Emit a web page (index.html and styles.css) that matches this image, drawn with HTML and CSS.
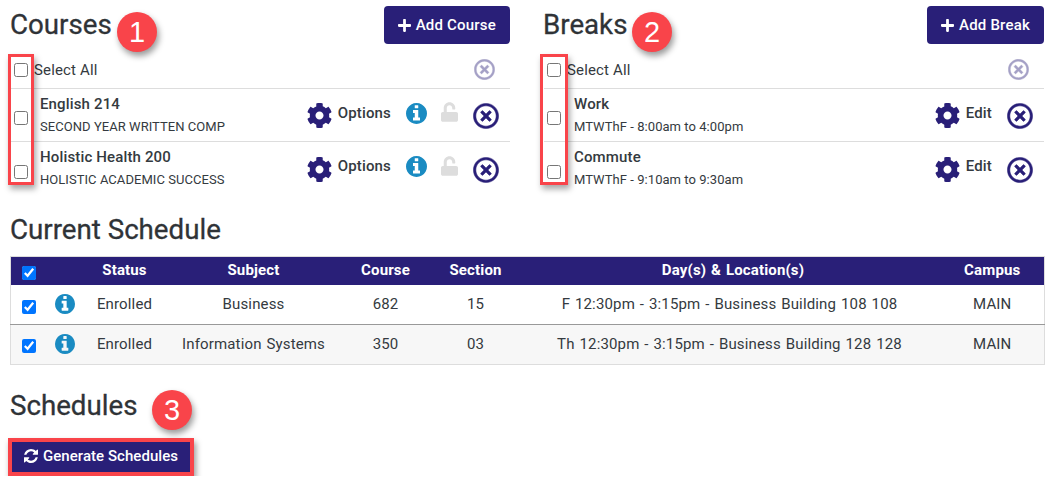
FILE: index.html
```html
<!DOCTYPE html>
<html lang="en">
<head>
    <meta charset="UTF-8">
    <title>Schedule Builder</title>
    <link rel="stylesheet" href="styles.css">
</head>
<body>
    <!-- icon set -->
    <svg class="icon-defs" aria-hidden="true">
        <symbol id="i-cog" viewBox="16 8 480 496"><path d="M487.4 315.7l-42.6-24.6c4.3-23.2 4.3-47 0-70.2l42.6-24.6c4.9-2.8 7.1-8.6 5.5-14-11.1-35.6-30-67.8-54.7-94.6-3.8-4.1-10-5.1-14.8-2.3L380.8 110c-17.9-15.4-38.5-27.3-60.8-35.1V25.8c0-5.6-3.9-10.5-9.4-11.7-36.7-8.2-74.3-7.8-109.2 0-5.5 1.2-9.4 6.1-9.4 11.7V75c-22.2 7.9-42.8 19.8-60.8 35.1L88.7 85.5c-4.9-2.8-11-1.9-14.8 2.3-24.7 26.7-43.6 58.9-54.7 94.6-1.7 5.4.6 11.2 5.5 14L67.3 221c-4.3 23.2-4.3 47 0 70.2l-42.6 24.6c-4.9 2.8-7.1 8.6-5.5 14 11.1 35.6 30 67.8 54.7 94.6 3.8 4.1 10 5.1 14.8 2.3l42.6-24.6c17.9 15.4 38.5 27.3 60.8 35.1v49.2c0 5.6 3.9 10.5 9.4 11.7 36.7 8.2 74.3 7.8 109.2 0 5.5-1.2 9.4-6.1 9.4-11.7v-49.2c22.2-7.9 42.8-19.8 60.8-35.1l42.6 24.6c4.9 2.8 11 1.9 14.8-2.3 24.7-26.7 43.6-58.9 54.7-94.6 1.5-5.5-.7-11.3-5.6-14.1zM256 336c-44.1 0-80-35.9-80-80s35.9-80 80-80 80 35.9 80 80-35.9 80-80 80z"/></symbol>
        <symbol id="i-info" viewBox="128 128 1536 1536"><path d="M1152 1376v-160q0-14-9-23t-23-9h-96v-512q0-14-9-23t-23-9h-320q-14 0-23 9t-9 23v160q0 14 9 23t23 9h96v320h-96q-14 0-23 9t-9 23v160q0 14 9 23t23 9h448q14 0 23-9t9-23zm-128-896v-160q0-14-9-23t-23-9h-192q-14 0-23 9t-9 23v160q0 14 9 23t23 9h192q14 0 23-9t9-23zm640 416q0 209-103 385.5t-279.5 279.5-385.5 103-385.5-103-279.5-279.5-103-385.5 103-385.5 279.5-279.5 385.5-103 385.5 103 279.5 279.5 103 385.5z"/></symbol>
        <symbol id="i-unlock" viewBox="0 0 448 512"><path d="M400 256H152V152.9c0-39.6 31.7-72.5 71.3-72.9 40-.4 72.7 32.1 72.7 72v16c0 13.3 10.7 24 24 24h32c13.3 0 24-10.7 24-24v-16C376 68 307.5-.3 223.5 0 139.5.3 72 69.5 72 153.5V256H48c-26.5 0-48 21.5-48 48v160c0 26.5 21.5 48 48 48h352c26.5 0 48-21.5 48-48V304c0-26.5-21.5-48-48-48z"/></symbol>
        <symbol id="i-times" viewBox="0 0 512 512"><path d="M256 8C119 8 8 119 8 256s111 248 248 248 248-111 248-248S393 8 256 8zm0 448c-110.5 0-200-89.5-200-200S145.5 56 256 56s200 89.5 200 200-89.5 200-200 200zm101.8-262.2L295.6 256l62.2 62.2c4.7 4.7 4.7 12.3 0 17l-22.6 22.6c-4.7 4.7-12.3 4.7-17 0L256 295.6l-62.2 62.2c-4.7 4.7-12.3 4.7-17 0l-22.6-22.6c-4.7-4.7-4.7-12.3 0-17l62.2-62.2-62.2-62.2c-4.7-4.7-4.7-12.3 0-17l22.6-22.6c4.7-4.7 12.3-4.7 17 0l62.2 62.2 62.2-62.2c4.7-4.7 12.3-4.7 17 0l22.6 22.6c4.7 4.7 4.7 12.3 0 17z"/></symbol>
        <symbol id="i-plus" viewBox="0 0 448 448"><path d="M416 176H272V32c0-17.700-14.300-32-32-32h-32c-17.700 0-32 14.300-32 32v144H32c-17.700 0-32 14.300-32 32v32c0 17.700 14.300 32 32 32h144v144c0 17.700 14.300 32 32 32h32c17.700 0 32-14.300 32-32V272h144c17.700 0 32-14.300 32-32v-32c0-17.700-14.300-32-32-32z"/></symbol>
        <symbol id="i-refresh" viewBox="128 128 1536 1536"><path d="M1639 1056q0 5-1 7-64 268-268 434.500t-478 166.500q-146 0-282.500-55t-243.500-157l-129 129q-19 19-45 19t-45-19-19-45v-448q0-26 19-45t45-19h448q26 0 45 19t19 45-19 45l-137 137q71 66 161 102t187 36q134 0 250-65t186-179q11-17 53-117 8-23 30-23h192q13 0 22.500 9.500t9.500 22.500zm25-800v448q0 26-19 45t-45 19h-448q-26 0-45-19t-19-45 19-45l138-138q-148-137-349-137-134 0-250 65t-186 179q-11 17-53 117-8 23-30 23h-199q-13 0-22.500-9.500t-9.500-22.500v-7q65-268 270-434.500t480-166.500q146 0 284 55.500t245 156.500l130-129q19-19 45-19t45 19 19 45z"/></symbol>
    </svg>

    <main class="page">
        <div class="panels">
            <!-- courses -->
            <section class="panel">
                <div class="panel-head">
                    <h2>Courses</h2>
                    <button type="button" class="btn"><svg class="btn-icon"><use href="#i-plus"/></svg>Add Course</button>
                </div>
                <div class="select-row">
                    <input type="checkbox" class="select-check">
                    <span class="select-label">Select All</span>
                    <svg class="remove-all"><use href="#i-times"/></svg>
                </div>
                <div class="item">
                    <input type="checkbox" class="item-check">
                    <div class="item-text">
                        <div class="item-name">English 214</div>
                        <div class="item-sub">SECOND YEAR WRITTEN COMP</div>
                    </div>
                    <svg class="cog"><use href="#i-cog"/></svg>
                    <span class="action-label">Options</span>
                    <svg class="info"><use href="#i-info"/></svg>
                    <svg class="lock"><use href="#i-unlock"/></svg>
                    <svg class="remove"><use href="#i-times"/></svg>
                </div>
                <div class="item no-border">
                    <input type="checkbox" class="item-check">
                    <div class="item-text">
                        <div class="item-name">Holistic Health 200</div>
                        <div class="item-sub">HOLISTIC ACADEMIC SUCCESS</div>
                    </div>
                    <svg class="cog"><use href="#i-cog"/></svg>
                    <span class="action-label">Options</span>
                    <svg class="info"><use href="#i-info"/></svg>
                    <svg class="lock"><use href="#i-unlock"/></svg>
                    <svg class="remove"><use href="#i-times"/></svg>
                </div>
                <span class="callout-box"></span>
                <span class="badge badge-courses">1</span>
            </section>

            <!-- breaks -->
            <section class="panel panel-breaks">
                <div class="panel-head">
                    <h2>Breaks</h2>
                    <button type="button" class="btn"><svg class="btn-icon"><use href="#i-plus"/></svg>Add Break</button>
                </div>
                <div class="select-row">
                    <input type="checkbox" class="select-check">
                    <span class="select-label">Select All</span>
                    <svg class="remove-all"><use href="#i-times"/></svg>
                </div>
                <div class="item">
                    <input type="checkbox" class="item-check">
                    <div class="item-text">
                        <div class="item-name">Work</div>
                        <div class="item-sub">MTWThF - 8:00am to 4:00pm</div>
                    </div>
                    <svg class="cog"><use href="#i-cog"/></svg>
                    <span class="action-label">Edit</span>
                    <svg class="remove"><use href="#i-times"/></svg>
                </div>
                <div class="item no-border">
                    <input type="checkbox" class="item-check">
                    <div class="item-text">
                        <div class="item-name">Commute</div>
                        <div class="item-sub">MTWThF - 9:10am to 9:30am</div>
                    </div>
                    <svg class="cog"><use href="#i-cog"/></svg>
                    <span class="action-label">Edit</span>
                    <svg class="remove"><use href="#i-times"/></svg>
                </div>
                <span class="callout-box"></span>
                <span class="badge badge-breaks">2</span>
            </section>
        </div>

        <!-- current schedule -->
        <h2 class="schedule-title">Current Schedule</h2>
        <table class="schedule">
            <colgroup>
                <col class="col-check">
                <col class="col-info">
                <col class="col-status">
                <col class="col-subject">
                <col class="col-course">
                <col class="col-section">
                <col class="col-days">
                <col class="col-campus">
            </colgroup>
            <thead>
                <tr>
                    <th><input type="checkbox" checked></th>
                    <th></th>
                    <th>Status</th>
                    <th>Subject</th>
                    <th>Course</th>
                    <th>Section</th>
                    <th class="th-days">Day(s) &amp; Location(s)</th>
                    <th>Campus</th>
                </tr>
            </thead>
            <tbody>
                <tr>
                    <td><input type="checkbox" checked></td>
                    <td><svg class="info"><use href="#i-info"/></svg></td>
                    <td>Enrolled</td>
                    <td>Business</td>
                    <td>682</td>
                    <td>15</td>
                    <td>F 12:30pm - 3:15pm - Business Building 108 108</td>
                    <td>MAIN</td>
                </tr>
                <tr>
                    <td><input type="checkbox" checked></td>
                    <td><svg class="info"><use href="#i-info"/></svg></td>
                    <td>Enrolled</td>
                    <td>Information Systems</td>
                    <td>350</td>
                    <td>03</td>
                    <td>Th 12:30pm - 3:15pm - Business Building 128 128</td>
                    <td>MAIN</td>
                </tr>
            </tbody>
        </table>

        <!-- schedules -->
        <section class="generate">
            <h2>Schedules</h2>
            <button type="button" class="btn btn-generate"><svg class="btn-icon"><use href="#i-refresh"/></svg>Generate Schedules</button>
            <span class="badge badge-schedules">3</span>
        </section>
    </main>
</body>
</html>
```

FILE: styles.css
```css
body {
    font-family: Roboto, "Liberation Sans", sans-serif;
    background-color: #fff;
    color: #343a40;
    letter-spacing: 0.15px;
    margin: 0;
}

.icon-defs {
    display: none;
}

.page {
    padding: 6px 12px 0 10px;
}

h2 {
    font-size: 27.7px;
    font-weight: 400;
    line-height: 34px;
    letter-spacing: 0;
    margin: 0;
    color: #2f3337;
    -webkit-text-stroke: 0.3px #2f3337;
}

.panels {
    display: grid;
    grid-template-columns: 500px 500px;
    gap: 34px;
}

.panel {
    position: relative;
}

.panel-head {
    display: flex;
    justify-content: space-between;
    align-items: flex-start;
    height: 38px;
}

.panel-head h2 {
    margin-top: 2px;
}

.panel-breaks h2 {
    margin-left: -1px;
}

.btn {
    display: flex;
    align-items: center;
    height: 38px;
    padding: 0 14px;
    background-color: #291f78;
    color: #fff;
    border: none;
    border-radius: 4px;
    font-family: inherit;
    font-size: 15px;
    font-weight: 500;
    letter-spacing: 0.2px;
    cursor: pointer;
}

.btn-icon {
    width: 13px;
    height: 13px;
    margin-right: 5px;
    fill: #fff;
}

.select-row {
    display: flex;
    align-items: center;
    height: 45px;
    padding-top: 7px;
    box-sizing: border-box;
    border-bottom: 1px solid #ddd;
}

.select-check {
    width: 14px;
    height: 14px;
    margin: 0 0 0 4px;
}

.panel-breaks .select-check {
    margin-left: 3px;
}

.select-label {
    font-size: 15px;
    margin-left: 6px;
}

.remove-all {
    width: 21px;
    height: 21px;
    margin-left: auto;
    margin-right: 15px;
    fill: #291f78;
    stroke: #291f78;
    stroke-width: 10px;
    opacity: 0.42;
}

.item {
    display: flex;
    align-items: center;
    height: 53px;
    box-sizing: border-box;
    border-bottom: 1px solid #ddd;
}

.no-border {
    border-bottom: none;
}

.item-check {
    width: 14px;
    height: 14px;
    margin: 6px 0 0 4px;
}

.panel-breaks .item-check {
    margin-left: 3px;
}

.item-text {
    margin: -2px auto 0 12px;
}

.panel-breaks .item-text {
    margin-left: 13px;
}

.item-name {
    font-size: 15px;
    font-weight: 500;
    line-height: 20px;
    margin-bottom: 5px;
}

.item-sub {
    font-size: 13px;
    line-height: 16px;
    letter-spacing: 0.05px;
}

.cog {
    width: 25px;
    height: 25px;
    fill: #291f78;
    margin-top: 1px;
}

.action-label {
    font-size: 15px;
    font-weight: 500;
    margin-left: 6px;
    margin-bottom: 5px;
}

.info {
    width: 21px;
    height: 21px;
    fill: #1a8bc2;
}

.item .info {
    margin-left: 15px;
    margin-bottom: 4px;
}

.lock {
    width: 17px;
    height: 20px;
    margin-left: 14px;
    margin-bottom: 6px;
    fill: #ddd;
}

.remove {
    width: 26px;
    height: 26px;
    fill: #291f78;
    stroke: #291f78;
    stroke-width: 10px;
    margin: 2px 11.500px 0 14.500px;
}

.schedule-title {
    margin: 18px 0 9px;
}

.schedule {
    width: 1034px;
    table-layout: fixed;
    border-collapse: collapse;
    border: 1px solid #ddd;
    font-size: 15px;
    word-spacing: 1px;
}

.col-check { width: 36px; }
.col-info { width: 34px; }
.col-status { width: 88px; }
.col-subject { width: 170px; }
.col-course { width: 94px; }
.col-section { width: 86px; }
.col-days { width: 422px; }
.col-campus { width: 104px; }

.schedule th {
    height: 28px;
    padding: 0 0 1px;
    background-color: #291f78;
    color: #fff;
    font-size: 15px;
    font-weight: 700;
    text-align: center;
    box-sizing: border-box;
}

.schedule .th-days {
    padding-left: 7px;
}

.schedule td {
    height: 40px;
    padding: 0 0 2px;
    text-align: center;
    box-sizing: border-box;
}

.schedule tbody tr:first-child td {
    padding: 1px 0 1px;
}

.schedule tbody tr + tr td {
    border-top: 1px solid #999;
    background-color: #f7f7f7;
}

.schedule input {
    width: 14px;
    height: 14px;
    margin: 5px 0 0 0;
    vertical-align: middle;
}

.schedule th input {
    margin-top: 3px;
}

.schedule .info {
    display: block;
    width: 20px;
    height: 20px;
    margin: 0 0 0 8px;
}

.generate {
    position: relative;
    margin-top: 24px;
}

/* red frame is part of the button box here */
.btn-generate {
    height: 38px;
    width: 186px;
    margin: 15px 0 0 -2px;
    padding: 0 0 2px 12px;
    border: 4px solid #f9444a;
    border-radius: 0;
    letter-spacing: 0.05px;
    box-shadow: 2px 4px 6px rgba(0, 0, 0, 0.4);
}

.btn-generate .btn-icon {
    width: 14px;
    height: 14px;
}

/* annotations laid over the page */
.callout-box {
    position: absolute;
    left: -2px;
    top: 48px;
    width: 26px;
    height: 131px;
    border: 3px solid #f9444a;
    box-sizing: border-box;
    box-shadow: 2px 4px 6px rgba(0, 0, 0, 0.35);
}

.panel-breaks .callout-box {
    left: -4px;
    width: 28px;
}

.badge {
    position: absolute;
    width: 40px;
    height: 40px;
    border-radius: 50%;
    background-color: #f9444a;
    color: #fff;
    font-family: "Liberation Sans", Arial, sans-serif;
    font-size: 29px;
    line-height: 40px;
    letter-spacing: 0;
    text-align: center;
    box-shadow: 2px 4px 6px rgba(0, 0, 0, 0.4);
}

.badge-courses {
    left: 107px;
    top: 6px;
}

.badge-breaks {
    left: 88px;
    top: 6px;
}

.badge-schedules {
    left: 142px;
    top: 1px;
}
```
